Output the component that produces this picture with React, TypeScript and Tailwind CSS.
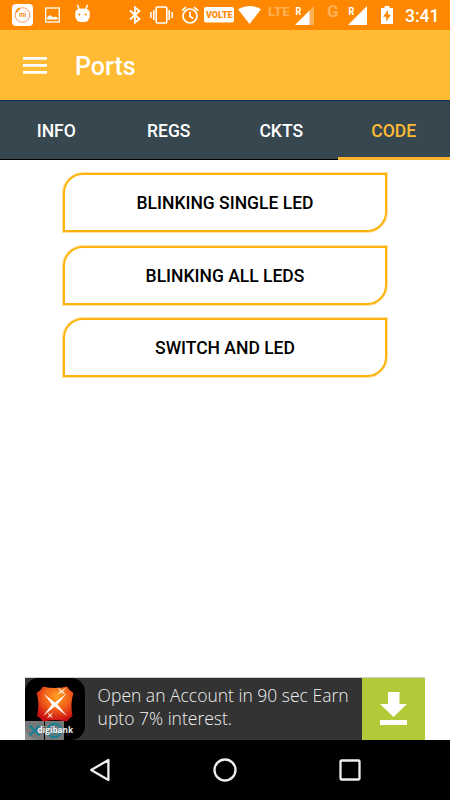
import React from 'react';

const TABS = ['INFO', 'REGS', 'CKTS', 'CODE'];
const PROGRAMS = ['BLINKING SINGLE LED', 'BLINKING ALL LEDS', 'SWITCH AND LED'];

// Roaming signal triangle, dimmed part shows the missing bars
function Signal({ className, partial }: { className: string; partial?: boolean }) {
  return (
    <svg className={className} width="20" height="20" viewBox="0 0 20 20" fill="#fff">
      {partial && <path d="M19 0V19H14V5Z" opacity=".35" />}
      <path d={partial ? 'M0 19 14.5 4.5V19Z' : 'M0 19 19 0V19Z'} />
      <text x="0.6" y="8.8" fontFamily="Roboto" fontSize="10.5" fontWeight="700" textLength="5.8" lengthAdjust="spacingAndGlyphs">
        R
      </text>
    </svg>
  );
}

function StatusBar() {
  return (
    <div className="flex h-[30px] items-start bg-[#ff8800] text-white">
      {/* notifications */}
      <svg className="mt-1 ml-3 shrink-0" width="21" height="22" viewBox="0 0 21 22">
        <rect width="21" height="22" rx="4" fill="#fff" />
        <circle cx="10.5" cy="11" r="7.3" fill="none" stroke="#f79a58" strokeWidth="1" />
        <path d="M4.2 8.3A7 7 0 0 1 8 4.4" fill="none" stroke="#ff8800" strokeWidth="1.8" />
        <text x="10.6" y="13.2" textAnchor="middle" fontFamily="Roboto" fontSize="6.5" fontWeight="700" fill="#ff8a20">
          mi
        </text>
      </svg>
      <svg className="mt-[7px] ml-3 shrink-0" width="15" height="16" viewBox="0 0 15 16">
        <rect x=".7" y="1" width="13.6" height="14" fill="none" stroke="#fff" strokeWidth="1.3" />
        <path d="M2.2 12.5V10.4L3.5 9 5 8.2 6.8 9.2 8.2 10.4 9.7 9.7 11 9.8 12.7 11V12.5Z" fill="#fff" />
      </svg>
      <svg className="mt-1 ml-[15px] shrink-0" width="15" height="19" viewBox="0 0 15 19">
        <path d="M2.5.8 4.3 6M12.5.8 10.7 6" stroke="#fff" strokeWidth="1.5" />
        <path
          d="M.3 8.5Q.3 4.6 7.5 4.6T14.7 8.5V13Q14.7 14 13.4 15V16Q12.5 18 7.5 18T1.6 16V15Q.3 14 .3 13Z"
          fill="#fff"
        />
        <circle cx="4.3" cy="10.5" r="1" fill="#ff8800" />
        <circle cx="10.7" cy="10.5" r="1" fill="#ff8800" />
      </svg>

      {/* system */}
      <svg className="mt-[6px] ml-[39px] shrink-0" width="12" height="18" viewBox="0 0 12 18">
        <path d="M1 4.5 10.4 13 5.9 16.7V1.3L10.4 5 1 13.5" fill="none" stroke="#fff" strokeWidth="1.8" />
      </svg>
      <svg className="mt-[6px] ml-[9px] shrink-0" width="23" height="18" viewBox="0 0 23 18" fill="none" stroke="#fff" strokeWidth="1.6">
        <rect x="6.2" y="1" width="10.6" height="16" rx="1" />
        <path d="M3.8 4V14M.9 6V12M19.2 4V14M22.1 6V12" />
      </svg>
      <svg className="mt-[6px] ml-2 shrink-0" width="18" height="18" viewBox="0 0 18 18" fill="none" stroke="#fff" strokeWidth="1.7">
        <circle cx="9" cy="10" r="7" />
        <path d="M9 5.7V10.5L12.2 12.5M1 4.6 5 1.2M17 4.6 13 1.2" />
      </svg>
      <svg className="mt-[7px] ml-[5px] shrink-0" width="30" height="16" viewBox="0 0 30 16">
        <rect width="30" height="15.5" rx="2" fill="#fff" />
        <text x="2" y="11" fontFamily="Roboto" fontSize="9" fontWeight="900" fill="#ff8800" textLength="26.5" lengthAdjust="spacingAndGlyphs">
          VOLTE
        </text>
      </svg>
      <svg className="mt-[6px] ml-1 shrink-0" width="23" height="18" viewBox="0 0 23 18">
        <path d="M0 3.3Q11.5-3.3 23 3.3L11.5 18Z" fill="#fff" />
      </svg>
      <div className="mt-[2px] ml-[7px] w-[27px] shrink-0 font-['Roboto',sans-serif] text-[13.6px] leading-[18px] font-bold text-white/35">
        LTE
      </div>
      <Signal className="mt-[6px] shrink-0" partial />
      <div className="mt-[1px] ml-3 w-[21px] shrink-0 font-['Roboto',sans-serif] text-[17px] leading-5 font-bold text-white/35">
        G
      </div>
      <Signal className="mt-[6px] shrink-0" />
      <svg className="mt-[6px] ml-[13px] shrink-0" width="12" height="18" viewBox="0 0 12 18">
        <path d="M0 2H3.5V0H8.5V2H12V18H0Z" fill="#fff" />
        <path d="M7 4 2 10.8H5.2V15.5L10 8.7H7Z" fill="#ff8800" />
      </svg>
      <div className="mt-[6px] ml-[12px] font-['Roboto',sans-serif] text-[17.5px] leading-5 font-medium">3:41</div>
    </div>
  );
}

function AdBanner() {
  return (
    <div className="mx-[25px] flex h-[63px] border-t border-[#c9d3c9] bg-[#333]">
      <div className="relative h-[62px] w-[60px] shrink-0 rounded-[14px] bg-black">
        <svg width="60" height="62" viewBox="0 0 60 62">
          <defs>
            <radialGradient id="ember" cx=".55" cy=".3" r=".7">
              <stop offset="0" stopColor="#ffa01c" />
              <stop offset=".5" stopColor="#f2601a" />
              <stop offset="1" stopColor="#c80d12" />
            </radialGradient>
          </defs>
          <path
            d="M18 8.5Q30 11.5 42 8.5Q44 12.5 48.5 15Q45 25 47.5 38Q44 40 42 43.5Q30 40.5 18 43.5Q16 40 12 38Q15 25 11.5 15Q16 12.5 18 8.5Z"
            fill="url(#ember)"
          />
          <path d="M19 16 29.8 24.5 41 16 32.5 26.5 42 38 29.8 28.5 18 38 27 26.5Z" fill="#fff" />
          <path
            d="M32.5 9 36.5 12.5 41.5 9.5 38 13.3 41 17.5 36.5 14.5 32 17 35 13.3ZM22.5 34 25 36.6 28.5 34 26 37.3 28 40.5 25 38.3 22 40.5 24 37.3Z"
            fill="#ffe3c8"
          />
        </svg>
        {/* close / info overlay */}
        <svg className="absolute bottom-0 left-0" width="60" height="19" viewBox="0 0 60 19">
          <path d="M0 0H19V19H0ZM20 0H39V19H20Z" fill="#c4caca" opacity=".6" />
          <g fill="none" stroke="#147f96" strokeWidth="2">
            <path d="M4.5 4.5 14.5 14.5M14.5 4.5 4.5 14.5" />
            <circle cx="29.5" cy="9.5" r="6.7" />
            <path d="M29.5 5V6.6M27.5 9H29.5V14" />
          </g>
          <text x="30.3" y="12.3" textAnchor="middle" fontFamily="Open Sans" fontSize="8.2" fontWeight="700" fill="#f2f5f5">
            digibank
          </text>
        </svg>
      </div>
      <p className="flex-1 pt-[6px] pl-[12.6px] font-['Open_Sans',sans-serif] text-[17.5px] leading-[23px] font-light whitespace-nowrap text-[#f0f0f0]">
        Open an Account in 90 sec Earn
        <br />
        upto 7% interest.
      </p>
      <div className="flex w-[63px] shrink-0 justify-center bg-[#b0cb37] pt-[14px]">
        <svg width="27" height="33" viewBox="0 0 27 33" fill="#fff">
          <path d="M8 0H19.5V12H27L13.5 25 0 12H8ZM0 28H27V33H0Z" />
        </svg>
      </div>
    </div>
  );
}

export default function App() {
  return (
    <div className="flex h-[800px] w-[450px] flex-col overflow-hidden bg-white font-['Roboto',sans-serif]">
      <StatusBar />
      <header className="flex h-[70px] items-center bg-[#ffbb33] pl-[23px] text-white">
        <svg width="24" height="17" viewBox="0 0 24 17" fill="#fff">
          <path d="M0 0H24V2.7H0ZM0 7H24V9.7H0ZM0 14H24V16.7H0Z" />
        </svg>
        <h1 className="pt-[4px] pl-[28px] text-[25px] font-medium">Ports</h1>
      </header>
      <nav className="grid h-[60px] grid-cols-4 border-t border-[#17304d] bg-[#37474f]">
        {TABS.map((tab) => (
          <button
            key={tab}
            className={
              tab === 'CODE'
                ? 'border-b-[3px] border-[#ffb52b] pt-[5px] text-[17.5px] font-medium text-[#ffbb33]'
                : 'border-b border-black pt-[3px] text-[17.5px] font-medium text-white'
            }
          >
            {tab}
          </button>
        ))}
      </nav>

      <main className="flex flex-1 flex-col items-center gap-[13.5px] pt-[13px]">
        {PROGRAMS.map((name) => (
          <button
            key={name}
            className="h-[59px] w-[324px] rounded-tl-[20px] rounded-br-[20px] border-2 border-[#ffb20d] pt-[2px] text-[17.5px] font-medium text-black shadow-[0_0_0_1px_#ffb20d66]"
          >
            {name}
          </button>
        ))}
      </main>

      <AdBanner />
      <div className="flex h-[60px] items-center justify-center gap-[102px] bg-black">
        <svg width="22" height="24" viewBox="0 0 22 24" fill="none" stroke="#eee" strokeWidth="2.3" strokeLinejoin="round">
          <path d="M2.2 12 19.4 2V22Z" />
        </svg>
        <svg width="24" height="24" viewBox="0 0 24 24" fill="none" stroke="#eee" strokeWidth="2.3">
          <circle cx="12" cy="12" r="10.5" />
        </svg>
        <svg width="22" height="22" viewBox="0 0 22 22" fill="none" stroke="#eee" strokeWidth="2.3">
          <rect x="1.5" y="1.5" width="19" height="19" rx="1" />
        </svg>
      </div>
    </div>
  );
}
